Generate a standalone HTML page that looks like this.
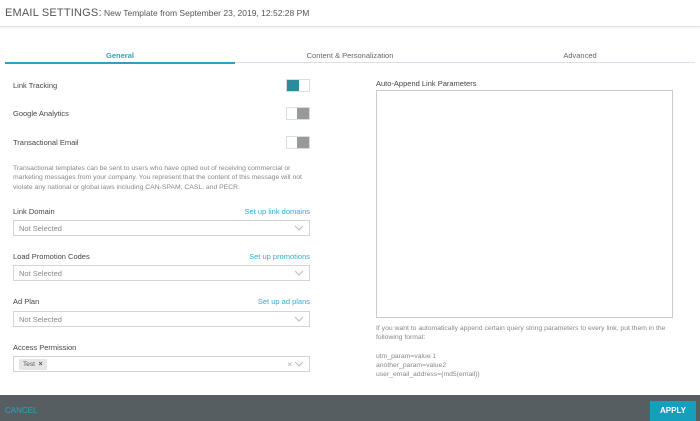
<!DOCTYPE html>
<html><head><style>
*{box-sizing:border-box;margin:0;padding:0}
body{width:700px;height:421px;overflow:hidden;background:#fff;font-family:"Liberation Sans",sans-serif;color:#444;position:relative}
.a{position:absolute}
.hdr{left:0;top:0;width:700px;height:27px;border-bottom:1px solid #e2e2e2;box-shadow:0 1px 2px #eee}
.lbl{font-size:7.5px;color:#444}
.tog{width:24px;height:13px;border:1px solid #ddd;background:#fff}
.tog i{position:absolute;top:0;width:12px;height:11px}
.sel{left:13px;width:297px;height:16px;border:1px solid #d4d4d4;font-size:7.5px;color:#888;padding:3px 5px}
.chev{position:absolute;right:5px;top:4px;width:10px;height:6px}
.lnk{font-size:7.5px;color:#2aaed0;text-align:right;right:390px}
.small{font-size:6.8px;color:#888;line-height:9.3px}
</style></head><body>
<div class="a hdr"></div>
<div class="a" style="left:5px;top:7px;font-size:11px;color:#555;letter-spacing:0.2px">EMAIL SETTINGS:</div>
<div class="a" style="left:104px;top:8px;font-size:8.5px;color:#555">New Template from September 23, 2019, 12:52:28 PM</div>

<div class="a" style="left:5px;top:62px;width:690px;height:1px;background:#dde"></div>
<div class="a" style="left:5px;top:62px;width:230px;height:2px;background:#2aa3bf"></div>
<div class="a" style="left:5px;top:51px;width:230px;text-align:center;font-size:7.5px;font-weight:bold;color:#2aa3bf">General</div>
<div class="a" style="left:235px;top:51px;width:230px;text-align:center;font-size:7.5px;color:#666">Content &amp; Personalization</div>
<div class="a" style="left:465px;top:51px;width:230px;text-align:center;font-size:7.5px;color:#666">Advanced</div>

<div class="a lbl" style="left:13px;top:81px">Link Tracking</div>
<div class="a tog" style="left:286px;top:79px"><i style="left:0;background:#2e8a9a"></i></div>
<div class="a lbl" style="left:13px;top:109px">Google Analytics</div>
<div class="a tog" style="left:286px;top:107px"><i style="right:0;background:#959a9c"></i></div>
<div class="a lbl" style="left:13px;top:138px">Transactional Email</div>
<div class="a tog" style="left:286px;top:136px"><i style="right:0;background:#959a9c"></i></div>

<div class="a small" style="left:13px;top:164px;width:296px">Transactional templates can be sent to users who have opted out of receiving commercial or marketing messages from your company. You represent that the content of this message will not violate any national or global laws including CAN-SPAM, CASL, and PECR.</div>

<div class="a lbl" style="left:13px;top:207px">Link Domain</div>
<div class="a lnk" style="top:207px">Set up link domains</div>
<div class="a sel" style="top:220px">Not Selected<svg class="chev" viewBox="0 0 10 6"><path d="M1 1l4 4 4-4" fill="none" stroke="#bbb"/></svg></div>
<div class="a lbl" style="left:13px;top:252px">Load Promotion Codes</div>
<div class="a lnk" style="top:252px">Set up promotions</div>
<div class="a sel" style="top:265px">Not Selected<svg class="chev" viewBox="0 0 10 6"><path d="M1 1l4 4 4-4" fill="none" stroke="#bbb"/></svg></div>
<div class="a lbl" style="left:13px;top:297px">Ad Plan</div>
<div class="a lnk" style="top:297px">Set up ad plans</div>
<div class="a sel" style="top:311px">Not Selected<svg class="chev" viewBox="0 0 10 6"><path d="M1 1l4 4 4-4" fill="none" stroke="#bbb"/></svg></div>
<div class="a lbl" style="left:13px;top:343px">Access Permission</div>
<div class="a sel" style="top:356px;padding:2px 5px"><span style="display:inline-block;background:#e6e6e6;color:#555;font-size:6.5px;padding:2px 4px;border-radius:1px">Test &nbsp;<b style="font-size:7px">×</b></span><span style="position:absolute;right:17px;top:3px;color:#aaa;font-size:8px">×</span><svg class="chev" viewBox="0 0 10 6"><path d="M1 1l4 4 4-4" fill="none" stroke="#bbb"/></svg></div>

<div class="a lbl" style="left:376px;top:79px">Auto-Append Link Parameters</div>
<div class="a" style="left:376px;top:90px;width:297px;height:228px;border:1px solid #ccc"></div>
<div class="a small" style="left:376px;top:324px;width:295px">If you want to automatically append certain query string parameters to every link, put them in the following format:<br><br>utm_param=value 1<br>another_param=value2<br>user_email_address={md5(email)}</div>

<div class="a" style="left:0;top:395px;width:700px;height:26px;background:#575e61"></div>
<div class="a" style="left:5px;top:406px;font-size:8px;color:#2aa3bf">CANCEL</div>
<div class="a" style="left:650px;top:401px;width:46px;height:20px;background:#169ebd;color:#fff;font-size:8px;font-weight:bold;text-align:center;line-height:20px">APPLY</div>
</body></html>
